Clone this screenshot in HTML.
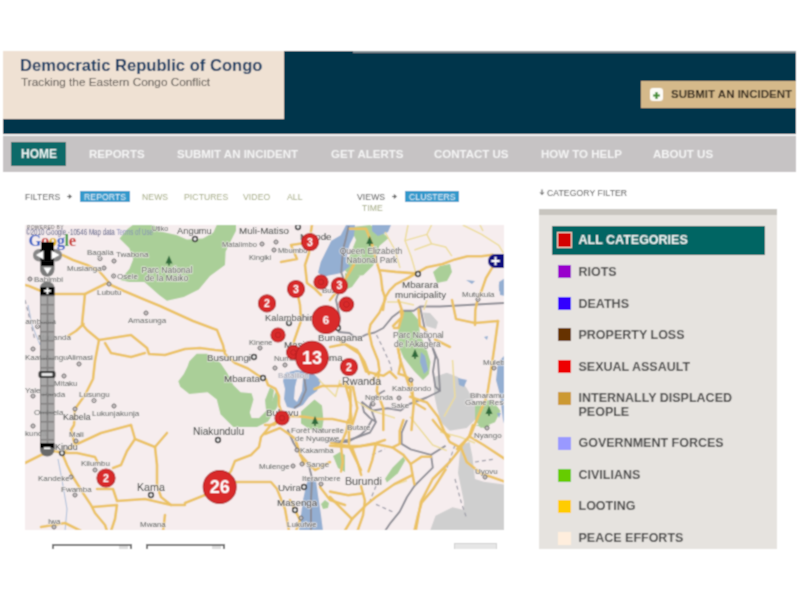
<!DOCTYPE html>
<html><head><meta charset="utf-8">
<style>
html,body{margin:0;padding:0;background:#fff;width:800px;height:600px;overflow:hidden;}
body{position:relative;font-family:"Liberation Sans",sans-serif;}
.a{position:absolute;white-space:nowrap;line-height:1;}
#hdr{position:absolute;left:3px;top:51px;width:793px;height:83px;background:#04344b;}
#hdrline{position:absolute;left:353px;top:51px;width:443px;height:2px;background:#7d8a92;}
#beige{position:absolute;left:3px;top:51px;width:280.5px;height:67.5px;background:#efe1d3;}
#title{left:20px;top:57.5px;font-size:16.6px;font-weight:bold;color:#0f3862;}
#sub{left:21px;top:77px;font-size:11.8px;color:#4f4b47;}
#sbtn{position:absolute;left:641px;top:81px;width:155px;height:27px;background:#d5b98a;}
#sico{position:absolute;left:650px;top:88px;width:13px;height:13px;background:#fdfcf7;border-radius:3px;}
#stxt{left:671px;top:89px;font-size:11.5px;font-weight:bold;color:#2a2117;}
#navl{position:absolute;left:3px;top:134px;width:793px;height:2px;background:#f3f3f3;}
#nav{position:absolute;left:3px;top:136px;width:793px;height:36px;background:#c6c3c4;}
#home{position:absolute;left:11px;top:142px;width:55px;height:24px;background:#0d6b69;}
.nv{top:149px;font-size:11.5px;font-weight:bold;color:#f4f4f4;}
.fl{font-size:8.6px;letter-spacing:0.1px;color:#444;}
.fi{font-size:8.6px;letter-spacing:0.1px;color:#9fa67a;}
.hl{position:absolute;background:#3399cc;}
#cat{position:absolute;left:539px;top:209px;width:237.5px;height:340px;background:#e6e3df;}
#catb{position:absolute;left:539px;top:209px;width:237.5px;height:6px;background:#c8c5bf;}
#allc{position:absolute;left:552px;top:225.5px;width:212.5px;height:29.5px;background:#036563;}
.sw{position:absolute;width:13px;height:13px;}
.ct{font-size:12.5px;font-weight:bold;color:#454545;}
#map{position:absolute;left:25px;top:225px;width:479px;height:305px;background:#f4eeee;overflow:hidden;}
.selb{position:absolute;top:544px;height:6px;border:2px solid #6e6e6e;border-bottom:none;background:#fff;}
</style></head><body><svg width="0" height="0" style="position:absolute"><filter id="soft" x="0" y="0" width="100%" height="100%"><feConvolveMatrix order="3" kernelMatrix="1 2 1 2 6 2 1 2 1" divisor="18" edgeMode="duplicate" preserveAlpha="true"/></filter></svg><div id="wrap" style="position:absolute;left:-8px;top:-8px;width:816px;height:616px;background:#fff;filter:url(#soft)"><div id="inner" style="position:absolute;left:8px;top:8px;width:800px;height:600px;">
<div id="hdr"></div>
<div id="hdrline"></div>
<div id="beige"></div>
<div id="title" class="a">Democratic Republic of Congo</div>
<div id="sub" class="a">Tracking the Eastern Congo Conflict</div>
<div id="sbtn"></div>
<div id="sico"><svg width="13" height="13" viewBox="0 0 13 13"><path d="M6.5 3v7M3 6.5h7" stroke="#3c8a2c" stroke-width="2.2"/></svg></div>
<div id="stxt" class="a">SUBMIT AN INCIDENT</div>
<div id="navl"></div>
<div id="nav"></div>
<div id="home"></div>
<div class="a nv" style="left:21px;font-size:12px;top:148px;color:#eef6f5">HOME</div>
<div class="a nv" style="left:89px">REPORTS</div>
<div class="a nv" style="left:177px">SUBMIT AN INCIDENT</div>
<div class="a nv" style="left:331px">GET ALERTS</div>
<div class="a nv" style="left:434px">CONTACT US</div>
<div class="a nv" style="left:541px">HOW TO HELP</div>
<div class="a nv" style="left:653px">ABOUT US</div>

<div class="a fl" style="left:25px;top:192.5px">FILTERS</div>
<svg class="a" style="left:66.5px;top:193.5px" width="5" height="5" viewBox="0 0 5 5"><path d="M0,2.5h3M1.8,0.6L4.2,2.5L1.8,4.4" stroke="#444" stroke-width="1.1" fill="none"/></svg>
<div class="hl" style="left:80px;top:191px;width:50px;height:11px"></div>
<div class="a fl" style="left:84px;top:192.5px;color:#e8f4fa">REPORTS</div>
<div class="a fi" style="left:142px;top:192.5px">NEWS</div>
<div class="a fi" style="left:184px;top:192.5px">PICTURES</div>
<div class="a fi" style="left:243px;top:192.5px">VIDEO</div>
<div class="a fi" style="left:287px;top:192.5px">ALL</div>
<div class="a fl" style="left:357px;top:192.5px">VIEWS</div>
<svg class="a" style="left:392px;top:193.5px" width="5" height="5" viewBox="0 0 5 5"><path d="M0,2.5h3M1.8,0.6L4.2,2.5L1.8,4.4" stroke="#444" stroke-width="1.1" fill="none"/></svg>
<div class="hl" style="left:405px;top:191px;width:54px;height:11px"></div>
<div class="a fl" style="left:409px;top:192.5px;color:#e8f4fa">CLUSTERS</div>
<div class="a fi" style="left:362px;top:204px">TIME</div>
<svg class="a" style="left:539px;top:189px" width="6" height="7" viewBox="0 0 6 7"><path d="M3,0.5v4.5M1.2,3.4L3,5.6L4.8,3.4" stroke="#444" stroke-width="1" fill="none"/></svg>
<div class="a fl" style="left:547px;top:188.5px">CATEGORY FILTER</div>

<div id="cat"></div>
<div id="catb"></div>
<div id="allc"></div>
<div class="sw" style="left:557px;top:232px;width:13px;height:14px;background:#d40000;border:1px solid #f0d8c8"></div>
<div class="a ct" style="left:578.5px;top:234.3px;color:#f0f6f5">ALL CATEGORIES</div>
<div class="sw" style="left:558px;top:265px;background:#9900cc"></div>
<div class="a ct" style="left:578.5px;top:266.3px">RIOTS</div>
<div class="sw" style="left:558px;top:297px;background:#3300ff"></div>
<div class="a ct" style="left:578.5px;top:298.3px">DEATHS</div>
<div class="sw" style="left:558px;top:328px;background:#663300"></div>
<div class="a ct" style="left:578.5px;top:329.3px">PROPERTY LOSS</div>
<div class="sw" style="left:558px;top:360px;background:#ee0000"></div>
<div class="a ct" style="left:578.5px;top:361.3px">SEXUAL ASSAULT</div>
<div class="sw" style="left:558px;top:392px;background:#cc9933"></div>
<div class="a ct" style="left:578.5px;top:392.3px">INTERNALLY DISPLACED</div>
<div class="a ct" style="left:578.5px;top:406.3px">PEOPLE</div>
<div class="sw" style="left:558px;top:437px;background:#9999ff"></div>
<div class="a ct" style="left:578.5px;top:437.3px">GOVERNMENT FORCES</div>
<div class="sw" style="left:558px;top:469px;background:#66cc00"></div>
<div class="a ct" style="left:578.5px;top:469.3px">CIVILIANS</div>
<div class="sw" style="left:558px;top:500px;background:#ffcc00"></div>
<div class="a ct" style="left:578.5px;top:500.3px">LOOTING</div>
<div class="sw" style="left:558px;top:532px;background:#ffeedd"></div>
<div class="a ct" style="left:578.5px;top:532.3px">PEACE EFFORTS</div>

<div id="map"><svg width="479" height="305" viewBox="25 225 479 305" style="position:absolute;left:0;top:0;display:block">
<rect x="25" y="225" width="479" height="305" fill="#f6edee"/>
<polygon points="434.0,377.0 446.8,372.7 458.0,377.0 466.7,388.3 475.0,402.5 478.0,416.7 466.7,428.0 449.7,430.8 441.0,422.3 437.0,408.0 434.0,394.0" fill="#cfcfcf"/>
<polygon points="461.0,445.0 469.5,442.0 472.3,456.0 475.0,479.0 483.7,481.8 505.0,484.6 505.0,531.0 430.0,531.0 435.5,515.8 452.5,507.3 464.0,510.0 463.8,501.6 458.0,473.0 459.6,456.0" fill="#cfcfcf"/>
<polygon points="423.0,312.5 430.0,313.0 438.0,322.0 436.0,329.0 426.0,326.0" fill="#cfcfcf"/>
<polygon points="119.6,238.6 127.5,229.0 132.8,225.0 153.8,225.0 160.8,231.6 176.5,235.0 187.0,239.5 202.8,238.6 213.3,232.5 216.8,225.0 236.0,225.0 236.0,230.8 230.8,241.0 225.6,251.8 225.0,265.0 210.0,276.0 198.8,289.5 183.8,297.0 166.9,300.8 159.4,295.2 144.4,282.0 129.4,282.0 120.0,280.0 129.4,268.9 133.1,259.5 129.4,248.3 120.0,238.9" fill="#aacf98"/>
<polygon points="189.3,361.2 196.6,353.8 207.6,353.8 220.5,363.0 227.8,374.0 233.3,385.0 240.6,392.3 251.6,393.2 253.5,399.6 249.8,412.5 251.6,418.0 259.0,418.0 270.0,407.0 275.4,392.3 279.0,393.0 277.3,407.0 268.0,421.6 257.0,427.0 233.3,427.0 220.5,414.3 216.8,399.6 207.6,392.3 189.3,394.0 180.2,386.8 178.3,381.3 183.8,374.0 187.5,366.6" fill="#aacf98"/>
<polygon points="350.0,227.3 370.0,225.0 379.3,230.0 388.7,238.0 379.3,246.0 376.7,259.3 372.7,266.0 363.3,275.3 350.0,276.7 344.7,270.0 350.0,255.0 356.0,240.0" fill="#aacf98"/>
<polygon points="402.0,311.0 411.0,311.0 418.5,320.0 420.0,335.0 426.0,347.0 430.5,362.0 429.0,374.0 423.0,380.0 414.0,371.0 403.5,357.5 399.0,347.0 397.5,335.0 400.5,320.0" fill="#aacf98"/>
<polygon points="433.0,272.0 440.0,266.0 450.0,264.0 452.0,272.0 447.0,281.0 437.0,283.0" fill="#aacf98"/>
<polygon points="345.0,273.0 360.0,276.0 352.0,287.0 345.0,290.0" fill="#aacf98"/>
<polygon points="301.0,411.5 314.5,399.5 322.0,405.5 323.5,420.5 322.0,429.5 310.0,429.5 301.0,423.5" fill="#aacf98"/>
<polygon points="265.0,400.0 270.0,387.5 274.0,390.0 272.0,405.0 267.0,420.0" fill="#aacf98"/>
<polygon points="333.0,456.0 340.0,452.0 345.0,455.0 345.0,472.0 338.0,468.0" fill="#aacf98"/>
<polygon points="321.0,504.0 325.0,500.0 329.0,503.0 328.0,508.0 323.0,509.0" fill="#aacf98"/>
<polygon points="385.0,478.7 392.4,467.7 403.4,456.7 405.2,460.4 397.9,473.2 386.9,482.4" fill="#aacf98"/>
<polygon points="475.0,402.5 492.0,399.7 500.6,411.0 495.0,422.3 480.8,428.0 475.0,419.5" fill="#aacf98"/>
<polygon points="475.0,425.0 490.0,425.0 487.0,429.0" fill="#aacf98"/>
<polygon points="346.0,225.0 355.0,225.0 354.0,236.0 350.0,244.0 348.0,250.0 346.0,262.0 350.0,266.0 342.0,272.7 336.7,274.0 330.0,275.3 323.3,276.7 318.0,272.7 320.7,262.0 326.0,251.3 331.3,240.7 340.7,235.3" fill="#94afd2"/>
<polygon points="372.0,225.0 391.0,225.0 388.0,232.0 378.0,236.0 372.0,231.0" fill="#94afd2"/>
<polygon points="285.0,373.0 297.0,370.0 313.0,373.0 321.0,381.0 317.0,391.0 309.0,397.0 303.0,405.0 295.0,409.0 287.0,407.0 284.0,399.0 285.0,389.0 283.0,381.0" fill="#94afd2"/>
<polygon points="308.0,479.0 316.0,480.0 318.0,495.0 321.0,515.0 323.0,531.0 299.0,531.0 301.0,515.0 303.0,500.0 306.0,486.0" fill="#94afd2"/>
<polygon points="505.0,355.0 498.0,362.0 496.0,380.0 500.0,395.0 503.0,420.0 505.0,427.0" fill="#94afd2"/>
<polygon points="484.0,337.0 488.0,336.0 487.0,340.0" fill="#94afd2"/>
<polygon points="497.0,413.0 501.0,413.0 499.0,418.0" fill="#94afd2"/>
<polygon points="499.0,282.0 505.0,278.0 505.0,296.0 500.0,295.0" fill="#94afd2"/>
<polygon points="458.0,378.0 467.0,380.0 464.0,387.0 459.0,385.0" fill="#94afd2"/>
<polygon points="466.0,280.0 475.0,281.0 472.0,284.0" fill="#94afd2"/>
<polygon points="498.8,284.4 503.4,283.0 503.4,292.0 499.0,291.0" fill="#94afd2"/>
<polygon points="421.0,352.0 425.0,356.0 428.0,370.0 424.0,374.0 420.0,362.0" fill="#94afd2"/>
<polygon points="297.0,379.0 303.0,378.0 302.0,391.0 297.0,402.0 294.0,399.0 295.0,387.0" fill="#f6edee"/>
<polyline points="58.0,459.0 62.0,480.0 67.0,509.0 65.0,531.0" fill="none" stroke="#a8bcd8" stroke-width="1"/>
<polyline points="28.0,305.0 32.0,325.0 40.0,345.0" fill="none" stroke="#a8bcd8" stroke-width="1"/>
<polyline points="455.0,445.0 447.0,467.6" fill="none" stroke="#9a9aa6" stroke-width="1.2" stroke-dasharray="4 3"/>
<polyline points="455.0,479.0 461.0,501.6 466.7,518.6" fill="none" stroke="#9a9aa6" stroke-width="1.2" stroke-dasharray="4 3"/>
<polyline points="475.0,462.0 495.0,459.0" fill="none" stroke="#9a9aa6" stroke-width="1.2" stroke-dasharray="4 3"/>
<polyline points="376.5,335.0 382.5,347.0 390.0,363.5 393.0,375.5" fill="none" stroke="#9a9aa6" stroke-width="1.2" stroke-dasharray="4 3"/>
<polyline points="372.0,455.0 385.0,449.0" fill="none" stroke="#9a9aa6" stroke-width="1.2" stroke-dasharray="4 3"/>
<polyline points="376.0,486.0 370.0,500.7" fill="none" stroke="#9a9aa6" stroke-width="1.2" stroke-dasharray="4 3"/>
<polyline points="376.0,504.4 392.4,511.7" fill="none" stroke="#9a9aa6" stroke-width="1.2" stroke-dasharray="4 3"/>
<polyline points="25.0,300.0 30.0,320.0 35.0,340.0" fill="none" stroke="#9a9aa6" stroke-width="1.2" stroke-dasharray="4 3"/>
<polyline points="348.7,226.0 346.0,238.0 343.3,248.7 342.0,262.0 341.3,272.7 343.3,278.0 336.0,300.0 340.0,318.0 338.0,332.0" fill="none" stroke="#8c8c94" stroke-width="1.9" stroke-linejoin="round"/>
<polyline points="338.0,332.0 349.5,333.0 353.0,335.8 359.5,338.0 366.0,334.7 374.7,332.5 383.3,328.0 392.0,317.3 400.7,310.8 413.7,310.8 420.0,306.5 440.0,306.5 505.0,303.0" fill="none" stroke="#8c8c94" stroke-width="1.9" stroke-linejoin="round"/>
<polyline points="431.0,343.3 435.3,356.3 433.0,371.5 435.3,386.7 440.0,391.0 426.7,397.5 409.3,404.0 400.7,410.5 387.7,408.3 372.5,410.5 361.7,401.8" fill="none" stroke="#8c8c94" stroke-width="1.9" stroke-linejoin="round"/>
<polyline points="361.7,401.8 364.0,412.0 370.0,418.0 376.0,422.0" fill="none" stroke="#8c8c94" stroke-width="1.9" stroke-linejoin="round"/>
<polyline points="440.0,391.0 438.0,360.0 431.0,343.3 425.0,330.0 420.0,306.5" fill="none" stroke="#8c8c94" stroke-width="1.9" stroke-linejoin="round"/>
<polyline points="407.0,420.0 401.6,432.8 401.6,443.9 410.7,449.4 431.0,454.9 432.8,467.7 421.7,478.7 414.4,486.0 407.0,497.0 399.7,511.7 390.6,522.8 385.0,531.0" fill="none" stroke="#8c8c94" stroke-width="1.9" stroke-linejoin="round"/>
<polyline points="431.0,454.9 445.6,445.7" fill="none" stroke="#8c8c94" stroke-width="1.9" stroke-linejoin="round"/>
<polyline points="317.5,440.0 334.0,441.5 349.0,440.0 358.0,437.0 370.0,432.5 376.0,422.0 373.0,414.5 370.0,405.5 373.0,398.0 382.0,392.0 385.0,390.5" fill="none" stroke="#8c8c94" stroke-width="1.9" stroke-linejoin="round"/>
<polyline points="330.0,442.0 348.0,442.0 361.0,434.7 366.7,429.0 372.0,420.0" fill="none" stroke="#8c8c94" stroke-width="1.9" stroke-linejoin="round"/>
<polyline points="287.5,429.5 293.5,443.0 301.0,455.0 308.5,464.0 312.0,478.0" fill="none" stroke="#8c8c94" stroke-width="1.9" stroke-linejoin="round"/>
<polyline points="304.0,376.0 306.0,390.0 300.0,404.0 294.0,408.0" fill="none" stroke="#8c8c94" stroke-width="1.9" stroke-linejoin="round"/>
<polyline points="312.0,478.0 311.0,500.0 311.0,531.0" fill="none" stroke="#8c8c94" stroke-width="1.9" stroke-linejoin="round"/>
<polyline points="408.0,225.0 405.0,240.6 411.0,256.2 416.0,273.4" fill="none" stroke="#eddc9a" stroke-width="1.5" stroke-linejoin="round"/>
<polyline points="405.0,240.6 426.9,234.4 431.6,225.0" fill="none" stroke="#eddc9a" stroke-width="1.5" stroke-linejoin="round"/>
<polyline points="426.9,234.4 431.6,243.8 445.6,246.9 451.9,256.2" fill="none" stroke="#eddc9a" stroke-width="1.5" stroke-linejoin="round"/>
<polyline points="414.4,250.0 431.6,243.8" fill="none" stroke="#eddc9a" stroke-width="1.5" stroke-linejoin="round"/>
<polyline points="462.8,225.0 481.6,234.4 498.8,245.3 503.4,253.0" fill="none" stroke="#eddc9a" stroke-width="1.5" stroke-linejoin="round"/>
<polyline points="480.0,225.0 483.0,231.0" fill="none" stroke="#eddc9a" stroke-width="1.5" stroke-linejoin="round"/>
<polyline points="423.8,310.0 426.9,300.0" fill="none" stroke="#eddc9a" stroke-width="1.5" stroke-linejoin="round"/>
<polyline points="387.0,302.0 400.5,302.0 414.0,305.0" fill="none" stroke="#eddc9a" stroke-width="1.5" stroke-linejoin="round"/>
<polyline points="452.5,360.0 455.0,397.0 444.0,416.7" fill="none" stroke="#eddc9a" stroke-width="1.5" stroke-linejoin="round"/>
<polyline points="410.0,416.7 432.7,445.0 446.8,450.6" fill="none" stroke="#eddc9a" stroke-width="1.5" stroke-linejoin="round"/>
<polyline points="385.0,232.0 395.0,250.0 400.0,268.0" fill="none" stroke="#eddc9a" stroke-width="1.5" stroke-linejoin="round"/>
<polyline points="319.0,380.0 335.5,396.5 340.0,380.0" fill="none" stroke="#eddc9a" stroke-width="1.5" stroke-linejoin="round"/>
<polyline points="355.0,400.0 370.0,410.0 395.0,418.0" fill="none" stroke="#eddc9a" stroke-width="1.5" stroke-linejoin="round"/>
<polyline points="407.0,480.6 394.0,485.0" fill="none" stroke="#eddc9a" stroke-width="1.5" stroke-linejoin="round"/>
<polyline points="440.0,432.0 460.0,437.0 475.0,443.0" fill="none" stroke="#eddc9a" stroke-width="1.5" stroke-linejoin="round"/>
<polyline points="62.5,255.0 73.0,260.0 87.0,265.0 99.0,271.0 106.0,279.0 111.0,285.0 124.0,291.0 143.0,299.0 160.0,306.0 193.0,321.0 217.0,330.0 223.0,345.0 225.0,354.0 235.0,363.0 248.0,368.5 259.0,376.0 266.0,379.5 268.0,385.0 275.4,388.6 279.0,396.0 279.0,405.0 281.0,410.6 282.0,419.0" fill="none" stroke="#ebc263" stroke-width="2.6" stroke-linejoin="round" stroke-linecap="round"/>
<polyline points="25.0,285.0 29.0,286.0 41.0,291.0 55.0,294.0 71.0,294.0 85.0,294.0 99.0,287.0 106.0,283.5" fill="none" stroke="#ebc263" stroke-width="2.6" stroke-linejoin="round" stroke-linecap="round"/>
<polyline points="85.0,294.0 82.0,324.0 87.0,330.0 99.0,340.0 95.0,361.0 93.0,379.0 85.0,395.0 75.0,409.0 74.0,425.0 71.0,430.0 75.0,445.0 62.0,453.0" fill="none" stroke="#ebc263" stroke-width="2.6" stroke-linejoin="round" stroke-linecap="round"/>
<polyline points="68.0,336.0 76.0,331.0 83.5,324.0" fill="none" stroke="#ebc263" stroke-width="2.6" stroke-linejoin="round" stroke-linecap="round"/>
<polyline points="99.0,340.0 131.0,335.0 147.0,348.0 149.0,354.0 165.0,355.0 185.0,349.0 200.0,348.0 215.0,350.0 225.0,351.0" fill="none" stroke="#ebc263" stroke-width="2.6" stroke-linejoin="round" stroke-linecap="round"/>
<polyline points="105.0,343.0 111.0,353.0 131.0,357.0 145.0,353.0" fill="none" stroke="#ebc263" stroke-width="2.6" stroke-linejoin="round" stroke-linecap="round"/>
<polyline points="25.0,463.0 41.0,455.0 55.0,451.0 62.0,453.0 77.0,453.0 95.0,457.0 98.0,463.0" fill="none" stroke="#ebc263" stroke-width="2.6" stroke-linejoin="round" stroke-linecap="round"/>
<polyline points="62.0,453.0 67.0,465.0 73.0,477.0 83.0,493.0 91.0,505.0 95.0,513.0 105.0,525.0 107.0,531.0" fill="none" stroke="#ebc263" stroke-width="2.6" stroke-linejoin="round" stroke-linecap="round"/>
<polyline points="75.0,445.0 101.0,433.0 131.0,425.0" fill="none" stroke="#ebc263" stroke-width="2.6" stroke-linejoin="round" stroke-linecap="round"/>
<polyline points="131.0,425.0 135.0,439.0 127.0,451.0 121.0,465.0 113.0,468.0" fill="none" stroke="#ebc263" stroke-width="2.6" stroke-linejoin="round" stroke-linecap="round"/>
<polyline points="135.0,439.0 155.0,447.0 167.0,433.0" fill="none" stroke="#ebc263" stroke-width="2.6" stroke-linejoin="round" stroke-linecap="round"/>
<polyline points="155.0,447.0 157.0,465.0 157.0,485.0 161.0,497.0 171.0,505.0 185.0,505.0" fill="none" stroke="#ebc263" stroke-width="2.6" stroke-linejoin="round" stroke-linecap="round"/>
<polyline points="97.0,489.0 113.0,489.0 117.0,501.0 145.0,499.0 171.0,505.0" fill="none" stroke="#ebc263" stroke-width="2.6" stroke-linejoin="round" stroke-linecap="round"/>
<polyline points="93.0,507.0 117.0,505.0 115.0,519.0 111.0,531.0" fill="none" stroke="#ebc263" stroke-width="2.6" stroke-linejoin="round" stroke-linecap="round"/>
<polyline points="41.0,527.0 65.0,523.0 81.0,531.0" fill="none" stroke="#ebc263" stroke-width="2.6" stroke-linejoin="round" stroke-linecap="round"/>
<polyline points="165.0,515.0 163.0,531.0" fill="none" stroke="#ebc263" stroke-width="2.6" stroke-linejoin="round" stroke-linecap="round"/>
<polyline points="185.0,503.0 205.0,495.0 219.0,487.0 231.0,471.0 235.0,461.0 251.0,455.0 259.0,447.0 261.0,437.0 271.0,425.0 282.0,419.0" fill="none" stroke="#ebc263" stroke-width="2.6" stroke-linejoin="round" stroke-linecap="round"/>
<polyline points="235.0,482.0 271.0,482.0 277.0,489.0 285.0,509.0 289.0,531.0" fill="none" stroke="#ebc263" stroke-width="2.6" stroke-linejoin="round" stroke-linecap="round"/>
<polyline points="281.0,262.0 297.0,259.0 291.0,245.0 305.0,243.0" fill="none" stroke="#ebc263" stroke-width="2.6" stroke-linejoin="round" stroke-linecap="round"/>
<polyline points="312.0,225.0 310.0,237.0 309.0,253.0 305.0,265.0 307.0,283.0 315.0,289.0 321.0,295.0" fill="none" stroke="#ebc263" stroke-width="2.6" stroke-linejoin="round" stroke-linecap="round"/>
<polyline points="297.0,291.0 300.0,305.0 301.0,321.0 294.0,341.0 294.0,350.0" fill="none" stroke="#ebc263" stroke-width="2.6" stroke-linejoin="round" stroke-linecap="round"/>
<polyline points="354.0,264.7 346.0,278.0 338.0,290.0 330.0,300.0" fill="none" stroke="#ebc263" stroke-width="2.6" stroke-linejoin="round" stroke-linecap="round"/>
<polyline points="350.0,228.7 366.0,228.7 368.7,235.3 372.7,246.0 376.7,262.0 380.7,275.3 382.5,290.0" fill="none" stroke="#ebc263" stroke-width="2.6" stroke-linejoin="round" stroke-linecap="round"/>
<polyline points="380.0,270.3 395.6,271.9 416.0,273.4 426.9,267.2 442.5,264.0 455.0,259.4 467.5,256.2 481.6,256.2 492.5,254.7" fill="none" stroke="#ebc263" stroke-width="2.6" stroke-linejoin="round" stroke-linecap="round"/>
<polyline points="416.0,273.4 408.0,278.0 395.6,284.4 389.4,290.6 384.7,298.4 383.0,310.0" fill="none" stroke="#ebc263" stroke-width="2.6" stroke-linejoin="round" stroke-linecap="round"/>
<polyline points="382.5,290.0 385.5,299.0 379.5,312.5 370.5,324.5 369.0,332.0 372.0,345.5 378.0,360.5 379.5,371.0 372.0,380.0" fill="none" stroke="#ebc263" stroke-width="2.6" stroke-linejoin="round" stroke-linecap="round"/>
<polyline points="330.0,347.0 345.0,344.0 357.0,350.0 364.5,362.0 369.0,374.0" fill="none" stroke="#ebc263" stroke-width="2.6" stroke-linejoin="round" stroke-linecap="round"/>
<polyline points="393.0,326.0 402.0,317.0 400.5,311.0" fill="none" stroke="#ebc263" stroke-width="2.6" stroke-linejoin="round" stroke-linecap="round"/>
<polyline points="418.5,309.5 420.0,326.0 426.0,330.0" fill="none" stroke="#ebc263" stroke-width="2.6" stroke-linejoin="round" stroke-linecap="round"/>
<polyline points="435.0,339.5 450.0,347.0" fill="none" stroke="#ebc263" stroke-width="2.6" stroke-linejoin="round" stroke-linecap="round"/>
<polyline points="397.5,347.0 400.5,360.5 405.0,374.0 411.0,391.0 415.0,403.0 425.0,409.0" fill="none" stroke="#ebc263" stroke-width="2.6" stroke-linejoin="round" stroke-linecap="round"/>
<polyline points="492.5,267.2 486.0,278.0 481.6,290.6 477.7,299.2 475.3,310.0 475.0,325.0" fill="none" stroke="#ebc263" stroke-width="2.6" stroke-linejoin="round" stroke-linecap="round"/>
<polyline points="452.0,300.0 456.0,319.0 475.0,323.0 498.0,321.0" fill="none" stroke="#ebc263" stroke-width="2.6" stroke-linejoin="round" stroke-linecap="round"/>
<polyline points="498.0,321.0 494.0,350.0 490.0,377.0 487.0,396.0 478.0,416.7 471.0,434.0 460.0,448.0" fill="none" stroke="#ebc263" stroke-width="2.6" stroke-linejoin="round" stroke-linecap="round"/>
<polyline points="461.0,447.8 466.7,462.0 480.8,473.3 505.0,481.8" fill="none" stroke="#ebc263" stroke-width="2.6" stroke-linejoin="round" stroke-linecap="round"/>
<polyline points="469.5,436.5 483.7,445.0 505.0,459.0" fill="none" stroke="#ebc263" stroke-width="2.6" stroke-linejoin="round" stroke-linecap="round"/>
<polyline points="410.0,396.8 427.0,402.5 438.0,416.7 444.0,430.8 449.7,442.0 461.0,447.8" fill="none" stroke="#ebc263" stroke-width="2.6" stroke-linejoin="round" stroke-linecap="round"/>
<polyline points="461.0,447.8 449.7,462.0 432.7,479.0 421.0,501.6 415.7,531.0" fill="none" stroke="#ebc263" stroke-width="2.6" stroke-linejoin="round" stroke-linecap="round"/>
<polyline points="457.0,449.0 469.0,437.0 473.0,425.0" fill="none" stroke="#ebc263" stroke-width="2.6" stroke-linejoin="round" stroke-linecap="round"/>
<polyline points="432.8,420.0 440.0,429.0 449.3,436.5" fill="none" stroke="#ebc263" stroke-width="2.6" stroke-linejoin="round" stroke-linecap="round"/>
<polyline points="345.0,383.0 351.0,405.0 349.0,425.0" fill="none" stroke="#ebc263" stroke-width="2.6" stroke-linejoin="round" stroke-linecap="round"/>
<polyline points="265.0,425.0 274.0,425.0 282.0,419.0 289.0,416.0 304.0,416.7 317.5,419.0 332.5,419.0 346.0,422.0 352.0,425.0" fill="none" stroke="#ebc263" stroke-width="2.6" stroke-linejoin="round" stroke-linecap="round"/>
<polyline points="352.0,425.0 350.5,410.0 350.5,389.0 346.0,386.0 322.0,386.0 314.5,389.0" fill="none" stroke="#ebc263" stroke-width="2.6" stroke-linejoin="round" stroke-linecap="round"/>
<polyline points="265.0,434.0 280.0,428.0 284.5,431.0 295.0,438.5 299.5,452.0 304.0,464.0" fill="none" stroke="#ebc263" stroke-width="2.6" stroke-linejoin="round" stroke-linecap="round"/>
<polyline points="331.0,443.0 349.0,446.0 361.0,446.0 376.0,443.0 385.0,440.0" fill="none" stroke="#ebc263" stroke-width="2.6" stroke-linejoin="round" stroke-linecap="round"/>
<polyline points="349.0,425.0 349.0,446.0 355.0,458.0 361.0,470.0" fill="none" stroke="#ebc263" stroke-width="2.6" stroke-linejoin="round" stroke-linecap="round"/>
<polyline points="330.0,445.7 352.0,447.5 375.9,443.9 392.4,447.5 399.7,443.9 399.7,431.0 403.4,420.0" fill="none" stroke="#ebc263" stroke-width="2.6" stroke-linejoin="round" stroke-linecap="round"/>
<polyline points="392.4,447.5 403.4,454.9 410.7,464.0 412.6,475.0 414.4,484.2" fill="none" stroke="#ebc263" stroke-width="2.6" stroke-linejoin="round" stroke-linecap="round"/>
<polyline points="410.7,464.0 421.7,456.7 431.0,456.7" fill="none" stroke="#ebc263" stroke-width="2.6" stroke-linejoin="round" stroke-linecap="round"/>
<polyline points="412.6,475.0 394.2,484.2 375.9,497.0 366.7,504.4 352.0,519.0 344.7,531.0" fill="none" stroke="#ebc263" stroke-width="2.6" stroke-linejoin="round" stroke-linecap="round"/>
<polyline points="361.0,486.0 364.9,500.7 363.0,515.4 357.5,531.0" fill="none" stroke="#ebc263" stroke-width="2.6" stroke-linejoin="round" stroke-linecap="round"/>
<polyline points="330.0,491.6 348.3,495.2 363.0,493.4" fill="none" stroke="#ebc263" stroke-width="2.6" stroke-linejoin="round" stroke-linecap="round"/>
<polyline points="330.0,497.0 339.0,506.2 352.0,519.0" fill="none" stroke="#ebc263" stroke-width="2.6" stroke-linejoin="round" stroke-linecap="round"/>
<polyline points="375.9,443.9 372.2,460.4 368.5,471.4" fill="none" stroke="#ebc263" stroke-width="2.6" stroke-linejoin="round" stroke-linecap="round"/>
<polyline points="341.0,445.7 342.8,462.2 341.0,471.4" fill="none" stroke="#ebc263" stroke-width="2.6" stroke-linejoin="round" stroke-linecap="round"/>
<polyline points="352.0,447.5 357.5,462.2 361.2,475.0" fill="none" stroke="#ebc263" stroke-width="2.6" stroke-linejoin="round" stroke-linecap="round"/>
<polyline points="348.3,420.0 346.5,431.0 341.0,443.9" fill="none" stroke="#ebc263" stroke-width="2.6" stroke-linejoin="round" stroke-linecap="round"/>
<polyline points="445.6,469.5 432.8,489.7 421.7,502.6 418.0,515.4 414.4,531.0" fill="none" stroke="#ebc263" stroke-width="2.6" stroke-linejoin="round" stroke-linecap="round"/>
<polyline points="320.0,487.0 330.0,500.0 345.0,505.0" fill="none" stroke="#ebc263" stroke-width="2.6" stroke-linejoin="round" stroke-linecap="round"/>
<polyline points="300.0,455.0 315.0,470.0 330.0,462.0" fill="none" stroke="#ebc263" stroke-width="2.6" stroke-linejoin="round" stroke-linecap="round"/>
<polyline points="290.0,500.0 300.0,520.0 296.0,531.0" fill="none" stroke="#ebc263" stroke-width="2.6" stroke-linejoin="round" stroke-linecap="round"/>
<polyline points="398.5,300.0 402.8,313.0 398.5,328.0 394.0,328.0" fill="none" stroke="#ebc263" stroke-width="2.6" stroke-linejoin="round" stroke-linecap="round"/>
<polyline points="398.5,349.8 400.7,362.8 398.5,373.7 405.0,375.8 411.5,380.0 413.7,404.0 411.5,430.0" fill="none" stroke="#ebc263" stroke-width="2.6" stroke-linejoin="round" stroke-linecap="round"/>
<polyline points="340.0,384.5 353.0,386.7 357.3,408.3 350.8,430.0" fill="none" stroke="#ebc263" stroke-width="2.6" stroke-linejoin="round" stroke-linecap="round"/>
<polyline points="340.0,341.0 359.5,354.0 366.0,371.5 383.3,375.8 389.8,371.5 396.3,378.0" fill="none" stroke="#ebc263" stroke-width="2.6" stroke-linejoin="round" stroke-linecap="round"/>
<polyline points="379.0,371.5 376.8,391.0 383.3,408.3 383.3,430.0" fill="none" stroke="#ebc263" stroke-width="2.6" stroke-linejoin="round" stroke-linecap="round"/>
<circle cx="195" cy="239" r="2" fill="#f6edee" stroke="#5a5a5a" stroke-width="1"/><circle cx="195" cy="239" r="0.7" fill="#777"/>
<circle cx="298" cy="227" r="2" fill="#f6edee" stroke="#5a5a5a" stroke-width="1"/><circle cx="298" cy="227" r="0.7" fill="#777"/>
<circle cx="100" cy="258.6" r="2" fill="#f6edee" stroke="#5a5a5a" stroke-width="1"/><circle cx="100" cy="258.6" r="0.7" fill="#777"/>
<circle cx="114" cy="261" r="2" fill="#f6edee" stroke="#5a5a5a" stroke-width="1"/><circle cx="114" cy="261" r="0.7" fill="#777"/>
<circle cx="104" cy="268" r="2" fill="#f6edee" stroke="#5a5a5a" stroke-width="1"/><circle cx="104" cy="268" r="0.7" fill="#777"/>
<circle cx="113.6" cy="276" r="2" fill="#f6edee" stroke="#5a5a5a" stroke-width="1"/><circle cx="113.6" cy="276" r="0.7" fill="#777"/>
<circle cx="30" cy="279" r="2" fill="#f6edee" stroke="#5a5a5a" stroke-width="1"/><circle cx="30" cy="279" r="0.7" fill="#777"/>
<circle cx="109" cy="284" r="2" fill="#f6edee" stroke="#5a5a5a" stroke-width="1"/><circle cx="109" cy="284" r="0.7" fill="#777"/>
<circle cx="146" cy="313" r="2" fill="#f6edee" stroke="#5a5a5a" stroke-width="1"/><circle cx="146" cy="313" r="0.7" fill="#777"/>
<circle cx="262" cy="244" r="2" fill="#f6edee" stroke="#5a5a5a" stroke-width="1"/><circle cx="262" cy="244" r="0.7" fill="#777"/>
<circle cx="274" cy="250" r="2" fill="#f6edee" stroke="#5a5a5a" stroke-width="1"/><circle cx="274" cy="250" r="0.7" fill="#777"/>
<circle cx="276" cy="242" r="2" fill="#f6edee" stroke="#5a5a5a" stroke-width="1"/><circle cx="276" cy="242" r="0.7" fill="#777"/>
<circle cx="289" cy="323" r="2" fill="#f6edee" stroke="#5a5a5a" stroke-width="1"/><circle cx="289" cy="323" r="0.7" fill="#777"/>
<circle cx="418" cy="274" r="2" fill="#f6edee" stroke="#5a5a5a" stroke-width="1"/><circle cx="418" cy="274" r="0.7" fill="#777"/>
<circle cx="478" cy="299.4" r="2" fill="#f6edee" stroke="#5a5a5a" stroke-width="1"/><circle cx="478" cy="299.4" r="0.7" fill="#777"/>
<circle cx="260" cy="348" r="2" fill="#f6edee" stroke="#5a5a5a" stroke-width="1"/><circle cx="260" cy="348" r="0.7" fill="#777"/>
<circle cx="254" cy="357" r="2" fill="#f6edee" stroke="#5a5a5a" stroke-width="1"/><circle cx="254" cy="357" r="0.7" fill="#777"/>
<circle cx="263" cy="378" r="2" fill="#f6edee" stroke="#5a5a5a" stroke-width="1"/><circle cx="263" cy="378" r="0.7" fill="#777"/>
<circle cx="275" cy="368" r="2" fill="#f6edee" stroke="#5a5a5a" stroke-width="1"/><circle cx="275" cy="368" r="0.7" fill="#777"/>
<circle cx="285" cy="365" r="2" fill="#f6edee" stroke="#5a5a5a" stroke-width="1"/><circle cx="285" cy="365" r="0.7" fill="#777"/>
<circle cx="411" cy="380" r="2" fill="#f6edee" stroke="#5a5a5a" stroke-width="1"/><circle cx="411" cy="380" r="0.7" fill="#777"/>
<circle cx="373" cy="404" r="2" fill="#f6edee" stroke="#5a5a5a" stroke-width="1"/><circle cx="373" cy="404" r="0.7" fill="#777"/>
<circle cx="399" cy="398" r="2" fill="#f6edee" stroke="#5a5a5a" stroke-width="1"/><circle cx="399" cy="398" r="0.7" fill="#777"/>
<circle cx="494" cy="368" r="2" fill="#f6edee" stroke="#5a5a5a" stroke-width="1"/><circle cx="494" cy="368" r="0.7" fill="#777"/>
<circle cx="33" cy="349" r="2" fill="#f6edee" stroke="#5a5a5a" stroke-width="1"/><circle cx="33" cy="349" r="0.7" fill="#777"/>
<circle cx="79" cy="364" r="2" fill="#f6edee" stroke="#5a5a5a" stroke-width="1"/><circle cx="79" cy="364" r="0.7" fill="#777"/>
<circle cx="64" cy="376" r="2" fill="#f6edee" stroke="#5a5a5a" stroke-width="1"/><circle cx="64" cy="376" r="0.7" fill="#777"/>
<circle cx="33" cy="396" r="2" fill="#f6edee" stroke="#5a5a5a" stroke-width="1"/><circle cx="33" cy="396" r="0.7" fill="#777"/>
<circle cx="94" cy="400.6" r="2" fill="#f6edee" stroke="#5a5a5a" stroke-width="1"/><circle cx="94" cy="400.6" r="0.7" fill="#777"/>
<circle cx="75" cy="409" r="2" fill="#f6edee" stroke="#5a5a5a" stroke-width="1"/><circle cx="75" cy="409" r="0.7" fill="#777"/>
<circle cx="114" cy="406" r="2" fill="#f6edee" stroke="#5a5a5a" stroke-width="1"/><circle cx="114" cy="406" r="0.7" fill="#777"/>
<circle cx="37.5" cy="326.5" r="2" fill="#f6edee" stroke="#5a5a5a" stroke-width="1"/><circle cx="37.5" cy="326.5" r="0.7" fill="#777"/>
<circle cx="33" cy="426" r="2" fill="#f6edee" stroke="#5a5a5a" stroke-width="1"/><circle cx="33" cy="426" r="0.7" fill="#777"/>
<circle cx="76" cy="441" r="2" fill="#f6edee" stroke="#5a5a5a" stroke-width="1"/><circle cx="76" cy="441" r="0.7" fill="#777"/>
<circle cx="62" cy="453" r="2" fill="#f6edee" stroke="#5a5a5a" stroke-width="1"/><circle cx="62" cy="453" r="0.7" fill="#777"/>
<circle cx="95" cy="470" r="2" fill="#f6edee" stroke="#5a5a5a" stroke-width="1"/><circle cx="95" cy="470" r="0.7" fill="#777"/>
<circle cx="71" cy="477" r="2" fill="#f6edee" stroke="#5a5a5a" stroke-width="1"/><circle cx="71" cy="477" r="0.7" fill="#777"/>
<circle cx="75" cy="495" r="2" fill="#f6edee" stroke="#5a5a5a" stroke-width="1"/><circle cx="75" cy="495" r="0.7" fill="#777"/>
<circle cx="151" cy="495" r="2" fill="#f6edee" stroke="#5a5a5a" stroke-width="1"/><circle cx="151" cy="495" r="0.7" fill="#777"/>
<circle cx="54" cy="527" r="2" fill="#f6edee" stroke="#5a5a5a" stroke-width="1"/><circle cx="54" cy="527" r="0.7" fill="#777"/>
<circle cx="218" cy="440" r="2" fill="#f6edee" stroke="#5a5a5a" stroke-width="1"/><circle cx="218" cy="440" r="0.7" fill="#777"/>
<circle cx="297" cy="450" r="2" fill="#f6edee" stroke="#5a5a5a" stroke-width="1"/><circle cx="297" cy="450" r="0.7" fill="#777"/>
<circle cx="293" cy="466" r="2" fill="#f6edee" stroke="#5a5a5a" stroke-width="1"/><circle cx="293" cy="466" r="0.7" fill="#777"/>
<circle cx="302" cy="464" r="2" fill="#f6edee" stroke="#5a5a5a" stroke-width="1"/><circle cx="302" cy="464" r="0.7" fill="#777"/>
<circle cx="321" cy="484" r="2" fill="#f6edee" stroke="#5a5a5a" stroke-width="1"/><circle cx="321" cy="484" r="0.7" fill="#777"/>
<circle cx="304" cy="487" r="2" fill="#f6edee" stroke="#5a5a5a" stroke-width="1"/><circle cx="304" cy="487" r="0.7" fill="#777"/>
<circle cx="295" cy="510" r="2" fill="#f6edee" stroke="#5a5a5a" stroke-width="1"/><circle cx="295" cy="510" r="0.7" fill="#777"/>
<circle cx="301" cy="518" r="2" fill="#f6edee" stroke="#5a5a5a" stroke-width="1"/><circle cx="301" cy="518" r="0.7" fill="#777"/>
<circle cx="487" cy="428" r="2" fill="#f6edee" stroke="#5a5a5a" stroke-width="1"/><circle cx="487" cy="428" r="0.7" fill="#777"/>
<circle cx="485" cy="477" r="2" fill="#f6edee" stroke="#5a5a5a" stroke-width="1"/><circle cx="485" cy="477" r="0.7" fill="#777"/>
<circle cx="330" cy="322" r="2" fill="#f6edee" stroke="#5a5a5a" stroke-width="1"/><circle cx="330" cy="322" r="0.7" fill="#777"/>
<circle cx="195" cy="239" r="2.4" fill="#eee" stroke="#2a2a2a" stroke-width="1.5"/>
<circle cx="298" cy="227" r="2.4" fill="#eee" stroke="#2a2a2a" stroke-width="1.5"/>
<circle cx="289" cy="323" r="2.4" fill="#eee" stroke="#2a2a2a" stroke-width="1.5"/>
<circle cx="418" cy="274" r="2.4" fill="#eee" stroke="#2a2a2a" stroke-width="1.5"/>
<circle cx="254" cy="357" r="2.4" fill="#eee" stroke="#2a2a2a" stroke-width="1.5"/>
<circle cx="263" cy="378" r="2.4" fill="#eee" stroke="#2a2a2a" stroke-width="1.5"/>
<circle cx="151" cy="495" r="2.4" fill="#eee" stroke="#2a2a2a" stroke-width="1.5"/>
<circle cx="218" cy="440" r="2.4" fill="#eee" stroke="#2a2a2a" stroke-width="1.5"/>
<circle cx="304" cy="487" r="2.4" fill="#eee" stroke="#2a2a2a" stroke-width="1.5"/>
<circle cx="295" cy="510" r="2.4" fill="#eee" stroke="#2a2a2a" stroke-width="1.5"/>
<circle cx="338" cy="328" r="2.4" fill="#eee" stroke="#2a2a2a" stroke-width="1.5"/>
<circle cx="62" cy="453" r="2.4" fill="#eee" stroke="#2a2a2a" stroke-width="1.5"/>
<path d="M169,255.5 L172.5,263.5 L169.8,263.5 L169.8,265.5 L168.2,265.5 L168.2,263.5 L165.5,263.5 Z" fill="#2f6a3a"/>
<path d="M369.7,236 L373.2,244 L370.5,244 L370.5,246 L368.9,246 L368.9,244 L366.2,244 Z" fill="#2f6a3a"/>
<path d="M415,349 L418.5,357 L415.8,357 L415.8,359 L414.2,359 L414.2,357 L411.5,357 Z" fill="#2f6a3a"/>
<path d="M489,406 L492.5,414 L489.8,414 L489.8,416 L488.2,416 L488.2,414 L485.5,414 Z" fill="#2f6a3a"/>
<path d="M315,416 L318.5,424 L315.8,424 L315.8,426 L314.2,426 L314.2,424 L311.5,424 Z" fill="#2f6a3a"/>
<g font-family="Liberation Sans" style="paint-order:stroke" stroke="#f8f4f2" stroke-width="1.6" stroke-linejoin="round" stroke-opacity="0.8">
<text x="152" y="230.7" font-size="7.12" fill="#505050">Utiko</text>
<text x="177" y="233.7" font-size="9.35" fill="#1e1e1e">Angumu</text>
<text x="239" y="234.2" font-size="9.79" fill="#1e1e1e">Muli-Matiso</text>
<text x="87" y="255.2" font-size="8.01" fill="#505050">Bagalia</text>
<text x="116" y="257.2" font-size="8.01" fill="#505050">Twabona</text>
<text x="67" y="271.2" font-size="8.01" fill="#505050">Musianga</text>
<text x="117" y="279.2" font-size="8.01" fill="#505050">Osele</text>
<text x="34" y="282.2" font-size="8.01" fill="#505050">Babimbi</text>
<text x="97" y="295.2" font-size="8.01" fill="#505050">Lubutu</text>
<text x="128" y="323.2" font-size="8.01" fill="#505050">Amasunga</text>
<text x="141.6" y="272.7" font-size="8.46" fill="#505050">Parc National</text>
<text x="145" y="281.2" font-size="8.46" fill="#505050">de la Maiko</text>
<text x="222" y="247.2" font-size="7.57" fill="#505050">Matalimbo</text>
<text x="249" y="260.2" font-size="7.57" fill="#505050">Kingiki</text>
<text x="278" y="253.2" font-size="7.57" fill="#505050">Mbumbo</text>
<text x="265" y="320.7" font-size="9.35" fill="#1e1e1e">Kalambahiro</text>
<text x="300" y="239.7" font-size="9.79" fill="#1e1e1e">Mikode</text>
<text x="339.7" y="254.2" font-size="8.46" fill="#505050">Queen Elizabeth</text>
<text x="346.5" y="263.2" font-size="8.46" fill="#505050">National Park</text>
<text x="402" y="287.7" font-size="9.79" fill="#1e1e1e">Mbarara</text>
<text x="395" y="297.7" font-size="9.79" fill="#1e1e1e">municipality</text>
<text x="462" y="297.2" font-size="8.01" fill="#505050">Mutukula</text>
<text x="322" y="293.2" font-size="8.01" fill="#505050">Buza</text>
<text x="249" y="345.2" font-size="7.57" fill="#505050">Kinene</text>
<text x="207" y="360.7" font-size="9.79" fill="#1e1e1e">Busurungi</text>
<text x="224" y="381.7" font-size="9.79" fill="#1e1e1e">Mbarata</text>
<text x="284" y="347.7" font-size="9.79" fill="#1e1e1e">Masisi</text>
<text x="274" y="361.2" font-size="8.01" fill="#505050">Numbi</text>
<text x="278" y="378.2" font-size="8.01" fill="#9a9aa8">Bataillon</text>
<text x="266" y="415.7" font-size="9.79" fill="#1e1e1e">Bukavu</text>
<text x="316" y="360.7" font-size="9.79" fill="#1e1e1e">Goma</text>
<text x="318" y="340.7" font-size="9.79" fill="#1e1e1e">Bunagana</text>
<text x="342" y="384.7" font-size="10.68" fill="#1e1e1e">Rwanda</text>
<text x="393" y="338.2" font-size="8.46" fill="#505050">Parc National</text>
<text x="394" y="347.2" font-size="8.46" fill="#505050">de l'Akagera</text>
<text x="392" y="391.2" font-size="8.01" fill="#505050">Kabarondo</text>
<text x="365" y="400.2" font-size="8.01" fill="#505050">Ngenda</text>
<text x="391" y="408.2" font-size="8.01" fill="#505050">Sake</text>
<text x="483" y="365.2" font-size="8.01" fill="#505050">Muleba</text>
<text x="470" y="398.2" font-size="8.01" fill="#505050">Biharamulo</text>
<text x="465" y="405.2" font-size="8.01" fill="#505050">Game Reserve</text>
<text x="38" y="340.2" font-size="8.01" fill="#505050">Mukanda</text>
<text x="25" y="360.2" font-size="8.01" fill="#505050">Kaatshungu</text>
<text x="67" y="360.2" font-size="8.01" fill="#505050">Alimasi</text>
<text x="54" y="386.2" font-size="8.01" fill="#505050">Mitaku</text>
<text x="25" y="393.2" font-size="8.01" fill="#505050">Yale</text>
<text x="42" y="397.2" font-size="8.01" fill="#505050">Panda</text>
<text x="79" y="397.2" font-size="8.01" fill="#505050">Lusungu</text>
<text x="34" y="415.2" font-size="8.01" fill="#505050">Omisela</text>
<text x="63" y="420.2" font-size="8.90" fill="#1e1e1e">Kabela</text>
<text x="92" y="416.2" font-size="8.01" fill="#505050">Lukunjakunja</text>
<text x="20" y="323.7" font-size="8.01" fill="#505050">Samboula</text>
<text x="25" y="436.2" font-size="8.01" fill="#505050">kunda</text>
<text x="69" y="437.2" font-size="8.01" fill="#505050">Mali</text>
<text x="55" y="450.2" font-size="8.90" fill="#1e1e1e">Kindu</text>
<text x="81" y="466.2" font-size="8.01" fill="#505050">Kilumbu</text>
<text x="38" y="481.2" font-size="8.01" fill="#505050">Kandeke</text>
<text x="61" y="492.2" font-size="8.01" fill="#505050">Fwamba</text>
<text x="137" y="491.2" font-size="10.68" fill="#1e1e1e">Kama</text>
<text x="48" y="524.2" font-size="8.01" fill="#505050">Iwa</text>
<text x="140" y="527.2" font-size="8.01" fill="#505050">Mwana</text>
<text x="193" y="435.2" font-size="10.23" fill="#1e1e1e">Niakundulu</text>
<text x="291" y="433.2" font-size="8.01" fill="#505050">Forêt Naturelle</text>
<text x="295" y="441.2" font-size="8.01" fill="#505050">de Nyungwe</text>
<text x="300" y="453.2" font-size="8.01" fill="#505050">Kakamba</text>
<text x="259" y="469.2" font-size="8.01" fill="#505050">Mulenge</text>
<text x="306" y="467.2" font-size="8.01" fill="#505050">Sange</text>
<text x="302" y="481.2" font-size="8.01" fill="#505050">Iterambere</text>
<text x="278" y="490.7" font-size="9.79" fill="#1e1e1e">Uvira</text>
<text x="277" y="505.7" font-size="9.79" fill="#1e1e1e">Masenga</text>
<text x="287" y="527.2" font-size="8.01" fill="#505050">Lukufwe</text>
<text x="345" y="485.2" font-size="10.68" fill="#1e1e1e">Burundi</text>
<text x="347" y="430.2" font-size="8.01" fill="#505050">Butare</text>
<text x="474" y="438.2" font-size="8.01" fill="#505050">Nyango</text>
<text x="475" y="474.2" font-size="8.01" fill="#505050">Uyovu</text>
</g>
<circle cx="310" cy="242" r="8.5" fill="#d92b2c" stroke="#b41c1e" stroke-width="1.2"/>
<text x="310" y="245.78" font-family="Liberation Sans" font-weight="bold" font-size="10.5" fill="#fff" text-anchor="middle">3</text>
<circle cx="321" cy="282" r="7" fill="#d92b2c" stroke="#b41c1e" stroke-width="1.2"/>
<circle cx="321" cy="282" r="2.8" fill="none" stroke="#b52022" stroke-width="0.8"/>
<circle cx="339.4" cy="285.6" r="8" fill="#d92b2c" stroke="#b41c1e" stroke-width="1.2"/>
<text x="339.4" y="289.38" font-family="Liberation Sans" font-weight="bold" font-size="10.5" fill="#fff" text-anchor="middle">3</text>
<circle cx="296" cy="289" r="8.5" fill="#d92b2c" stroke="#b41c1e" stroke-width="1.2"/>
<text x="296" y="292.78" font-family="Liberation Sans" font-weight="bold" font-size="10.5" fill="#fff" text-anchor="middle">3</text>
<circle cx="267" cy="303.4" r="8.5" fill="#d92b2c" stroke="#b41c1e" stroke-width="1.2"/>
<text x="267" y="307.17999999999995" font-family="Liberation Sans" font-weight="bold" font-size="10.5" fill="#fff" text-anchor="middle">2</text>
<circle cx="346.4" cy="304.4" r="7.2" fill="#d92b2c" stroke="#b41c1e" stroke-width="1.2"/>
<circle cx="346.4" cy="304.4" r="2.9" fill="none" stroke="#b52022" stroke-width="0.8"/>
<circle cx="326" cy="319.6" r="13.8" fill="#d92b2c" stroke="#b41c1e" stroke-width="1.2"/>
<text x="326" y="323.74" font-family="Liberation Sans" font-weight="bold" font-size="11.5" fill="#fff" text-anchor="middle">6</text>
<circle cx="278" cy="335" r="7" fill="#d92b2c" stroke="#b41c1e" stroke-width="1.2"/>
<circle cx="278" cy="335" r="2.8" fill="none" stroke="#b52022" stroke-width="0.8"/>
<circle cx="293.4" cy="352.4" r="6.8" fill="#d92b2c" stroke="#b41c1e" stroke-width="1.2"/>
<circle cx="293.4" cy="352.4" r="2.7" fill="none" stroke="#b52022" stroke-width="0.8"/>
<circle cx="312" cy="357.6" r="16.2" fill="#d92b2c" stroke="#b41c1e" stroke-width="1.2"/>
<text x="312" y="364.08000000000004" font-family="Liberation Sans" font-weight="bold" font-size="18.0" fill="#fff" text-anchor="middle">13</text>
<circle cx="349" cy="367" r="8.5" fill="#d92b2c" stroke="#b41c1e" stroke-width="1.2"/>
<text x="349" y="370.78" font-family="Liberation Sans" font-weight="bold" font-size="10.5" fill="#fff" text-anchor="middle">2</text>
<circle cx="282" cy="418" r="7" fill="#d92b2c" stroke="#b41c1e" stroke-width="1.2"/>
<circle cx="282" cy="418" r="2.8" fill="none" stroke="#b52022" stroke-width="0.8"/>
<circle cx="106" cy="478" r="9" fill="#d92b2c" stroke="#b41c1e" stroke-width="1.2"/>
<text x="106" y="481.78" font-family="Liberation Sans" font-weight="bold" font-size="10.5" fill="#fff" text-anchor="middle">2</text>
<circle cx="219.7" cy="487" r="16.4" fill="#d92b2c" stroke="#b41c1e" stroke-width="1.2"/>
<text x="219.7" y="493.48" font-family="Liberation Sans" font-weight="bold" font-size="18.0" fill="#fff" text-anchor="middle">26</text>
<g>
<text x="27" y="228.5" font-family="Liberation Sans" font-size="5" fill="#555" letter-spacing="0.3">POWERED BY</text>
<text x="28.5" y="245.5" font-family="Liberation Serif" font-weight="bold" font-size="16.5" letter-spacing="-0.4"><tspan fill="#3b62c6">G</tspan><tspan fill="#c9322c">o</tspan><tspan fill="#e0b21c">o</tspan><tspan fill="#3b62c6">g</tspan><tspan fill="#3a9b3c">l</tspan><tspan fill="#c9322c">e</tspan></text>
<text x="26" y="235" font-family="Liberation Sans" font-size="9" fill="#3c4270" opacity="0.9" textLength="127" lengthAdjust="spacingAndGlyphs">©2010 Google -10546 Map data<tspan fill="#7d84b8"> Terms of Use</tspan></text>
<!-- pan control -->
<rect x="41" y="242" width="13" height="24" fill="#000"/>
<rect x="33" y="249" width="29" height="12.5" rx="6.2" fill="#7a7a7a" opacity="0.9"/>
<rect x="40.5" y="249" width="13.5" height="12.5" fill="#000"/>
<path d="M43.5,250.5 L36,255 L43.5,259.5 Z M51.5,250.5 L59.5,255 L51.5,259.5 Z" fill="#fff"/>
<path d="M40,262 h14.5 v7.5 a7.25,7.25 0 0 1 -14.5,0 Z" fill="#7a7a7a"/>
<rect x="41" y="261.5" width="13" height="4.5" fill="#000"/>
<path d="M43.5,267.5 L51.5,267.5 L47.5,274 Z" fill="#fff"/>
<!-- zoom + -->
<path d="M40,295.5 v-8 a7.25,6 0 0 1 14.5,0 v8 Z" fill="#7a7a7a"/>
<rect x="40" y="287" width="14.5" height="8.5" fill="#000"/>
<path d="M47.5,287.5 v6.5 M44.2,290.8 h6.6" stroke="#fff" stroke-width="1.8"/>
<!-- slider -->
<rect x="40" y="295.5" width="14.5" height="147.5" fill="#5e5e5e" opacity="0.75"/>
<g fill="#b4b4b4" opacity="0.75">
<rect x="41" y="296.5" width="5.7" height="7.5"/><rect x="48.3" y="296.5" width="5.5" height="7.5"/>
<rect x="41" y="305.5" width="5.7" height="7.5"/><rect x="48.3" y="305.5" width="5.5" height="7.5"/>
<rect x="41" y="314.5" width="5.7" height="7.5"/><rect x="48.3" y="314.5" width="5.5" height="7.5"/>
<rect x="41" y="323.5" width="5.7" height="7.5"/><rect x="48.3" y="323.5" width="5.5" height="7.5"/>
<rect x="41" y="332.5" width="5.7" height="7.5"/><rect x="48.3" y="332.5" width="5.5" height="7.5"/>
<rect x="41" y="341.5" width="5.7" height="7.5"/><rect x="48.3" y="341.5" width="5.5" height="7.5"/>
<rect x="41" y="350.5" width="5.7" height="7.5"/><rect x="48.3" y="350.5" width="5.5" height="7.5"/>
<rect x="41" y="359.5" width="5.7" height="7.5"/><rect x="48.3" y="359.5" width="5.5" height="7.5"/>
<rect x="41" y="368.5" width="5.7" height="7.5"/><rect x="48.3" y="368.5" width="5.5" height="7.5"/>
<rect x="41" y="377.5" width="5.7" height="7.5"/><rect x="48.3" y="377.5" width="5.5" height="7.5"/>
<rect x="41" y="386.5" width="5.7" height="7.5"/><rect x="48.3" y="386.5" width="5.5" height="7.5"/>
<rect x="41" y="395.5" width="5.7" height="7.5"/><rect x="48.3" y="395.5" width="5.5" height="7.5"/>
<rect x="41" y="404.5" width="5.7" height="7.5"/><rect x="48.3" y="404.5" width="5.5" height="7.5"/>
<rect x="41" y="413.5" width="5.7" height="7.5"/><rect x="48.3" y="413.5" width="5.5" height="7.5"/>
<rect x="41" y="422.5" width="5.7" height="7.5"/><rect x="48.3" y="422.5" width="5.5" height="7.5"/>
<rect x="41" y="431.5" width="5.7" height="7.5"/><rect x="48.3" y="431.5" width="5.5" height="7.5"/>
<rect x="41" y="440.5" width="5.7" height="7.5"/><rect x="48.3" y="440.5" width="5.5" height="7.5"/>
</g>
<rect x="38.5" y="371" width="17" height="7" rx="2" fill="#333"/>
<rect x="41.5" y="373.2" width="11" height="2.6" fill="#f4f4f4"/>
<rect x="40" y="443" width="14.5" height="6" fill="#000"/>
<path d="M40,448 h14.5 v1.5 a7.25,7 0 0 1 -14.5,0 Z" fill="#6a6a6a"/>
<rect x="44" y="447.3" width="6.5" height="1.8" fill="#fff"/>
<!-- overview button -->
<path d="M504,254 h-9 a7,7 0 0 0 0,14 h9 Z" fill="#0b0b7e"/>
<path d="M495.5,256.8 v8.4 M491.3,261 h8.4" stroke="#fff" stroke-width="2"/>
</g>

</svg></div>

<div class="selb" style="left:52px;width:76px"></div>
<div class="selb" style="left:146px;width:75px"></div>
<div style="position:absolute;left:119px;top:546px;width:9px;height:3px;background:#ddd"></div>
<div style="position:absolute;left:212px;top:546px;width:9px;height:3px;background:#ddd"></div>
<div style="position:absolute;left:454px;top:543px;width:41px;height:6px;background:#e6e6e6;border:1px solid #d0d0d0;border-bottom:none"></div>
<div style="position:absolute;left:0;top:549px;width:800px;height:51px;background:#fff"></div>
</div></div></body></html>
